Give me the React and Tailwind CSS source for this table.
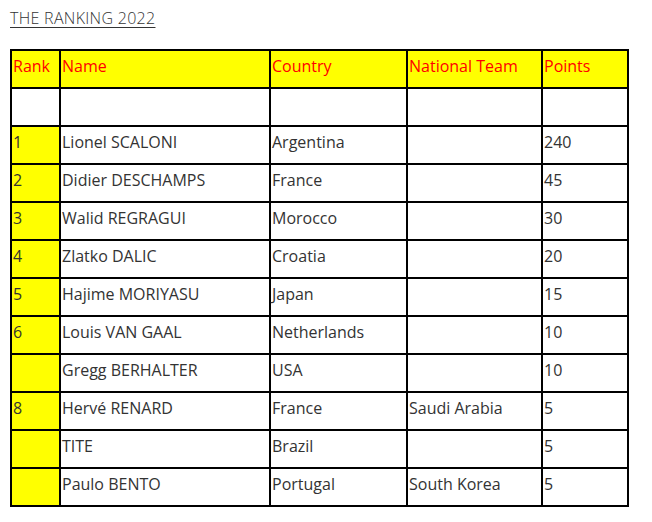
import React from 'react';

const rows = [
  { rank: '', name: '', country: '', team: '', points: '' },
  { rank: '1', name: 'Lionel SCALONI', country: 'Argentina', team: '', points: '240' },
  { rank: '2', name: 'Didier DESCHAMPS', country: 'France', team: '', points: '45' },
  { rank: '3', name: 'Walid REGRAGUI', country: 'Morocco', team: '', points: '30' },
  { rank: '4', name: 'Zlatko DALIC', country: 'Croatia', team: '', points: '20' },
  { rank: '5', name: 'Hajime MORIYASU', country: 'Japan', team: '', points: '15' },
  { rank: '6', name: 'Louis VAN GAAL', country: 'Netherlands', team: '', points: '10' },
  { rank: '', name: 'Gregg BERHALTER', country: 'USA', team: '', points: '10' },
  { rank: '8', name: 'Hervé RENARD', country: 'France', team: 'Saudi Arabia', points: '5' },
  { rank: '', name: 'TITE', country: 'Brazil', team: '', points: '5' },
  { rank: '', name: 'Paulo BENTO', country: 'Portugal', team: 'South Korea', points: '5' },
];

const headers = ['Rank', 'Name', 'Country', 'National Team', 'Points'];

export default function App() {
  return (
    <div className="w-[652px] h-[522px] bg-white px-[10px] pt-[6px] font-['Open_Sans',sans-serif]">
      <h1 className="text-[16px] font-light text-[#333] underline underline-offset-[3px] leading-[24px] tracking-[0.3px]">
        THE RANKING 2022
      </h1>

      <table className="mt-[19px] w-[617px] table-fixed border-collapse border-2 border-black text-[16px] text-[#333]">
        <colgroup>
          <col className="w-[49px]" />
          <col className="w-[210px]" />
          <col className="w-[137px]" />
          <col className="w-[135px]" />
          <col className="w-[86px]" />
        </colgroup>
        <thead>
          <tr>
            {headers.map((h) => (
              <th
                key={h}
                className="h-[38px] border-2 border-black bg-[#ffff00] text-left font-normal text-[#ff0000] px-[1px] pb-[7px] align-middle whitespace-nowrap"
              >
                {h}
              </th>
            ))}
          </tr>
        </thead>
        <tbody>
          {rows.map((r, i) => (
            <tr key={i}>
              <td className={`h-[38px] border-2 border-black px-[1px] pb-[6px] align-middle ${i === 0 ? 'bg-white' : 'bg-[#ffff00]'}`}>
                {r.rank}
              </td>
              <td className="h-[38px] border-2 border-black px-[1px] pb-[6px] align-middle whitespace-nowrap">{r.name}</td>
              <td className="h-[38px] border-2 border-black px-[1px] pb-[6px] align-middle whitespace-nowrap">{r.country}</td>
              <td className="h-[38px] border-2 border-black px-[1px] pb-[6px] align-middle whitespace-nowrap">{r.team}</td>
              <td className="h-[38px] border-2 border-black px-[1px] pb-[6px] align-middle">{r.points}</td>
            </tr>
          ))}
        </tbody>
      </table>
    </div>
  );
}
